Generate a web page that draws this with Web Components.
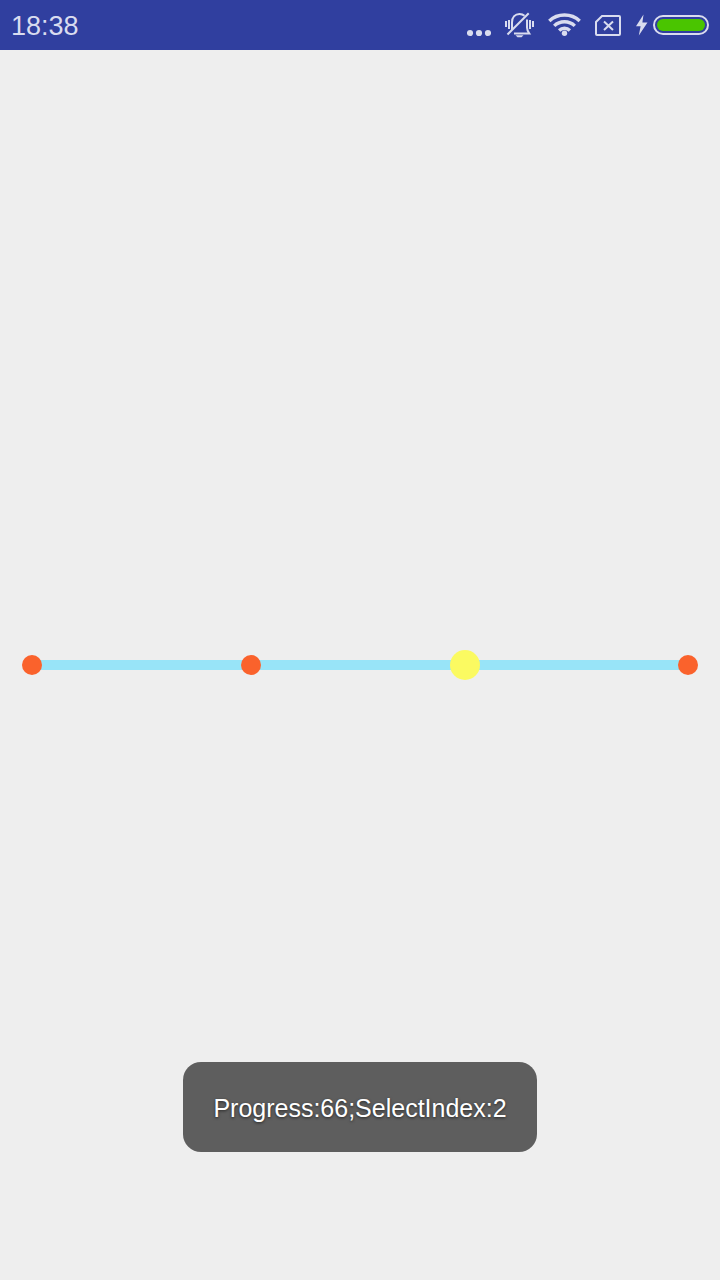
<!DOCTYPE html>
<html lang="en">
<head>
<meta charset="utf-8">
<meta name="viewport" content="width=device-width, initial-scale=1">
<title>Point seek bar</title>
<style>
  html, body { margin: 0; height: 100%; }
  body { background: #eeeeee; font-family: "Liberation Sans", Arial, sans-serif; }
</style>
</head>
<body>
<demo-screen>
  <status-bar slot="status" time="18:38"></status-bar>
  <point-seek-bar value="66" points="4"></point-seek-bar>
  <toast-message slot="toast">Progress:66;SelectIndex:2</toast-message>
</demo-screen>

<script>
class DemoScreen extends HTMLElement {
  constructor() {
    super();
    this.attachShadow({ mode: 'open' }).innerHTML = `
      <style>
        :host { display: flex; flex-direction: column; min-height: 100vh; }
        main { flex: 1; display: flex; flex-direction: column; justify-content: center; }
      </style>
      <slot name="status"></slot>
      <main><slot></slot></main>
      <slot name="toast"></slot>`;
  }
}
customElements.define('demo-screen', DemoScreen);

class StatusBar extends HTMLElement {
  constructor() {
    super();
    this.attachShadow({ mode: 'open' }).innerHTML = `
      <style>
        :host { display: block; background: #303f9f; color: #d9dcef; }
        header { display: flex; justify-content: space-between; align-items: center; height: 50px; padding: 0 11px; }
        time { font-size: 27px; line-height: 32px; padding-top: 2px; }
        .icons { display: flex; align-items: center; gap: 14px; }
        .power { display: flex; align-items: center; gap: 5px; }
        svg { display: block; }
      </style>
      <header>
        <time></time>
        <div class="icons">
          <svg width="24" height="26" viewBox="0 0 24 26" fill="currentColor" role="img" aria-label="More notifications">
            <circle cx="3" cy="21" r="3.1"/><circle cx="12" cy="21" r="3.1"/><circle cx="21" cy="21" r="3.1"/>
          </svg>
          <svg width="29" height="26" viewBox="0 0 29 26" fill="none" stroke="currentColor" stroke-width="2" role="img" aria-label="Silent">
            <path d="M7 18V10.500C7 5 10.200 2 14.500 2C16.600 2 18.300 2.700 19.500 3.800"/>
            <path d="M22 7.500V15.500C22 18 23 19.700 24.300 21.500H9"/>
            <path d="M2.500 22.500L23.700 1.300"/>
            <path d="M1 9V15M4 8V17M25 8V17M28 9V15"/>
            <path d="M10.500 23.300H18.500L16.500 25.200H12.500Z" fill="currentColor" stroke="none"/>
          </svg>
          <svg width="33" height="26" viewBox="0 0 33 26" fill="none" stroke="currentColor" stroke-width="3.400" role="img" aria-label="Wi-Fi">
            <path d="M1.300 9C9.500 1 23.500 1 31.700 9"/>
            <path d="M6.200 13.900C11.900 8.400 21.100 8.400 26.800 13.900"/>
            <path d="M11.100 18.400C14.100 15.600 18.900 15.600 21.900 18.400"/>
            <circle cx="16.500" cy="21.300" r="2.700" fill="currentColor" stroke="none"/>
          </svg>
          <svg width="26" height="26" viewBox="0 0 26 26" fill="none" stroke="currentColor" stroke-width="2" role="img" aria-label="No SIM card">
            <path d="M7 4H24Q25 4 25 5V22Q25 23 24 23H2Q1 23 1 22V10Z"/>
            <path d="M9 9.500L18 18M18 9.500L9 18"/>
          </svg>
          <div class="power">
            <svg width="13" height="22" viewBox="0 0 13 22" fill="currentColor" role="img" aria-label="Charging">
              <path d="M8.500 0.500L1 12.200H5.600L3.800 21.500L12.500 8.600H7.400Z"/>
            </svg>
            <svg width="56" height="20" viewBox="0 0 56 20" role="img" aria-label="Battery full">
              <rect x="1" y="1" width="54" height="18" rx="9" fill="none" stroke="currentColor" stroke-width="2"/>
              <rect x="4" y="4" width="48" height="12" rx="6" fill="#4ac500"/>
            </svg>
          </div>
        </div>
      </header>`;
  }
  connectedCallback() {
    this.shadowRoot.querySelector('time').textContent = this.getAttribute('time');
  }
}
customElements.define('status-bar', StatusBar);

class PointSeekBar extends HTMLElement {
  constructor() {
    super();
    this.attachShadow({ mode: 'open' }).innerHTML = `
      <style>
        :host { display: grid; align-items: center; padding: 0 17px; }
        .line, .points, input { grid-area: 1 / 1; }
        .line { height: 10px; margin: 0 15px; background: #98e4f8; }
        .points { display: flex; justify-content: space-between; margin: 0 5px; }
        .points i { width: 20px; height: 20px; border-radius: 50%; background: #fa622c; }
        input { appearance: none; -webkit-appearance: none; width: 100%; height: 30px; margin: 0; background: transparent; z-index: 1; }
        input::-webkit-slider-thumb { -webkit-appearance: none; width: 30px; height: 30px; border: 0; border-radius: 50%; background: #fbfa61; }
        input::-moz-range-thumb { width: 30px; height: 30px; border: 0; border-radius: 50%; background: #fbfa61; }
      </style>
      <div class="line"></div>
      <div class="points"></div>
      <input type="range" min="0" max="100" aria-label="Progress">`;
  }
  connectedCallback() {
    const points = Number(this.getAttribute('points'));
    this.shadowRoot.querySelector('.points').innerHTML = '<i></i>'.repeat(points);
    this.shadowRoot.querySelector('input').value = this.getAttribute('value');
  }
}
customElements.define('point-seek-bar', PointSeekBar);

class ToastMessage extends HTMLElement {
  constructor() {
    super();
    this.attachShadow({ mode: 'open' }).innerHTML = `
      <style>
        :host { position: fixed; left: 0; right: 0; bottom: 128px; display: flex; justify-content: center; pointer-events: none; }
        div { padding: 31px 30px 29px; border-radius: 18px; background: #5e5e5e; color: #fff;
              font-size: 25px; line-height: 30px; white-space: nowrap; text-shadow: 0 1px 3px rgba(0, 0, 0, 0.6); }
      </style>
      <div role="status"><slot></slot></div>`;
  }
}
customElements.define('toast-message', ToastMessage);
</script>
</body>
</html>
